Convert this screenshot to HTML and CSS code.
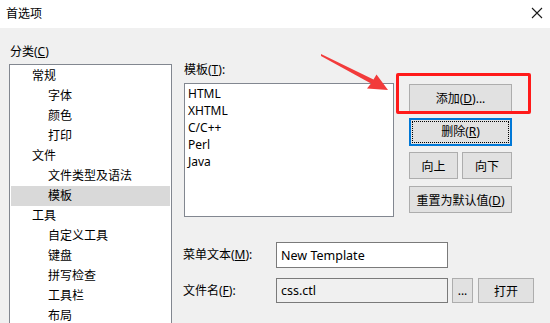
FILE: index.html
```html
<!DOCTYPE html>
<html lang="zh">
<head>
  <meta charset="UTF-8">
  <title>首选项</title>
  <link rel="stylesheet" href="styles.css">
</head>
<body>

<div class="window">
  <div class="titlebar">
    <span class="title">首选项</span>
    <svg class="close" width="12" height="12" viewBox="0 0 12 12">
      <path d="M1 1 L11 11 M11 1 L1 11" stroke="#1a1a1a" stroke-width="1.1" fill="none"/>
    </svg>
  </div>

  <div class="content">
    <div class="left">
      <div class="label">分类(<u>C</u>)</div>
      <div class="tree">
        <div class="node l1">常规</div>
        <div class="node l2">字体</div>
        <div class="node l2">颜色</div>
        <div class="node l2">打印</div>
        <div class="node l1">文件</div>
        <div class="node l2">文件类型及语法</div>
        <div class="node l2 selected">模板</div>
        <div class="node l1">工具</div>
        <div class="node l2">自定义工具</div>
        <div class="node l2">键盘</div>
        <div class="node l2">拼写检查</div>
        <div class="node l2">工具栏</div>
        <div class="node l2">布局</div>
      </div>
    </div>

    <div class="right">
      <div class="label tpl-label">模板(<u>T</u>):</div>
      <div class="tpl-row">
        <div class="listbox">
          <div class="item">HTML</div>
          <div class="item">XHTML</div>
          <div class="item">C/C++</div>
          <div class="item">Perl</div>
          <div class="item">Java</div>
        </div>
        <div class="buttons">
          <button class="btn wide">添加(<u>D</u>)...</button>
          <button class="btn wide focused"><span class="focus-rect">删除(<u>R</u>)</span></button>
          <div class="pair">
            <button class="btn up">向上</button>
            <button class="btn down">向下</button>
          </div>
          <button class="btn wide reset">重置为默认值(<u>D</u>)</button>
        </div>
      </div>

      <div class="field">
        <div class="field-label">菜单文本(<u>M</u>):</div>
        <div class="input">New Template</div>
      </div>
      <div class="field">
        <div class="field-label">文件名(<u>F</u>):</div>
        <div class="input readonly">css.ctl</div>
        <button class="btn dots">...</button>
        <button class="btn open">打开</button>
      </div>
    </div>
  </div>

  <!-- 标注 -->
  <div class="callout"></div>
  <svg class="arrow" width="550" height="323" viewBox="0 0 550 323">
    <polygon points="321,54 373.5,79.5 376.5,74.5 388,90 367,88.5 371,83.5 321,56" fill="#f23b3b"/>
  </svg>
</div>

</body>
</html>
```

FILE: styles.css
```css
body {
  margin: 0;
  font-family: "Noto Sans", "Noto Sans CJK SC", sans-serif;
  font-size: 12px;
  color: #000;
  background: #f0f0f0;
}
.window {
  position: relative;
  width: 550px;
  height: 323px;
  overflow: hidden;
  background: #f0f0f0;
}
.titlebar {
  height: 28px;
  background: #fff;
  display: flex;
  align-items: center;
  justify-content: space-between;
  padding: 0 7px 2px 6px;
  box-sizing: border-box;
}
.title {
  font-size: 12px;
}
.content {
  display: flex;
}
.left {
  margin-left: 9px;
  width: 163px;
}
.label {
  line-height: 16px;
  height: 16px;
}
.left .label {
  margin: 16px 0 4px 1px;
}
u {
  text-decoration: underline;
  text-underline-offset: 1px;
}
.tree {
  background: #fff;
  border: 1px solid #828790;
  height: 300px;
  padding: 1px;
}
.node {
  height: 20px;
  line-height: 20px;
}
.l1 {
  padding-left: 21px;
}
.l2 {
  padding-left: 37px;
}
.selected {
  background: #d9d9d9;
}
.right {
  margin-left: 12px;
}
.tpl-label {
  margin: 34px 0 5px 0;
}
.tpl-row {
  display: flex;
}
.listbox {
  width: 208px;
  height: 131px;
  background: #fff;
  border: 1px solid #828790;
  padding-top: 1px;
}
.item {
  height: 17px;
  line-height: 17px;
  padding-left: 3px;
}
.buttons {
  margin-left: 15px;
  margin-top: 1px;
  display: flex;
  flex-direction: column;
  width: 103px;
}
.btn {
  font-family: inherit;
  font-size: 12px;
  background: #e1e1e1;
  border: 1px solid #adadad;
  padding: 0;
  margin: 0;
  color: #000;
  box-sizing: border-box;
}
.wide {
  width: 103px;
  height: 28px;
}
.focused {
  margin-top: 6px;
  border: 2px solid #0078d7;
  padding: 1px;
}
.focus-rect {
  display: block;
  height: 100%;
  line-height: 20px;
  border: 1px dotted #000;
  box-sizing: border-box;
}
.pair {
  display: flex;
  gap: 4px;
  margin-top: 6px;
}
.up {
  width: 49px;
  height: 27px;
}
.down {
  width: 50px;
  height: 27px;
}
.reset {
  margin-top: 7px;
  height: 27px;
}
.field {
  display: flex;
  align-items: center;
}
.field:first-of-type {
  margin-top: 0;
}
.tpl-row + .field {
  margin-top: 25px;
  height: 26px;
}
.field + .field {
  margin-top: 10px;
  height: 25px;
}
.field-label {
  width: 93px;
  margin-left: -1px;
  padding-bottom: 2px;
}
.input {
  width: 172px;
  height: 100%;
  box-sizing: border-box;
  border: 1px solid #7a7a7a;
  background: #fff;
  padding-left: 4px;
  display: flex;
  align-items: center;
  font-size: 12.5px;
}
.readonly {
  background: #f0f0f0;
}
.dots {
  width: 21px;
  height: 25px;
  margin-left: 4px;
  line-height: 14px;
}
.open {
  width: 56px;
  height: 25px;
  margin-left: 5px;
}
.callout {
  position: absolute;
  left: 396px;
  top: 73px;
  width: 135px;
  height: 41px;
  box-sizing: border-box;
  border: 3px solid #ff1a1a;
  border-radius: 2px;
}
.arrow {
  position: absolute;
  left: 0;
  top: 0;
}
```
